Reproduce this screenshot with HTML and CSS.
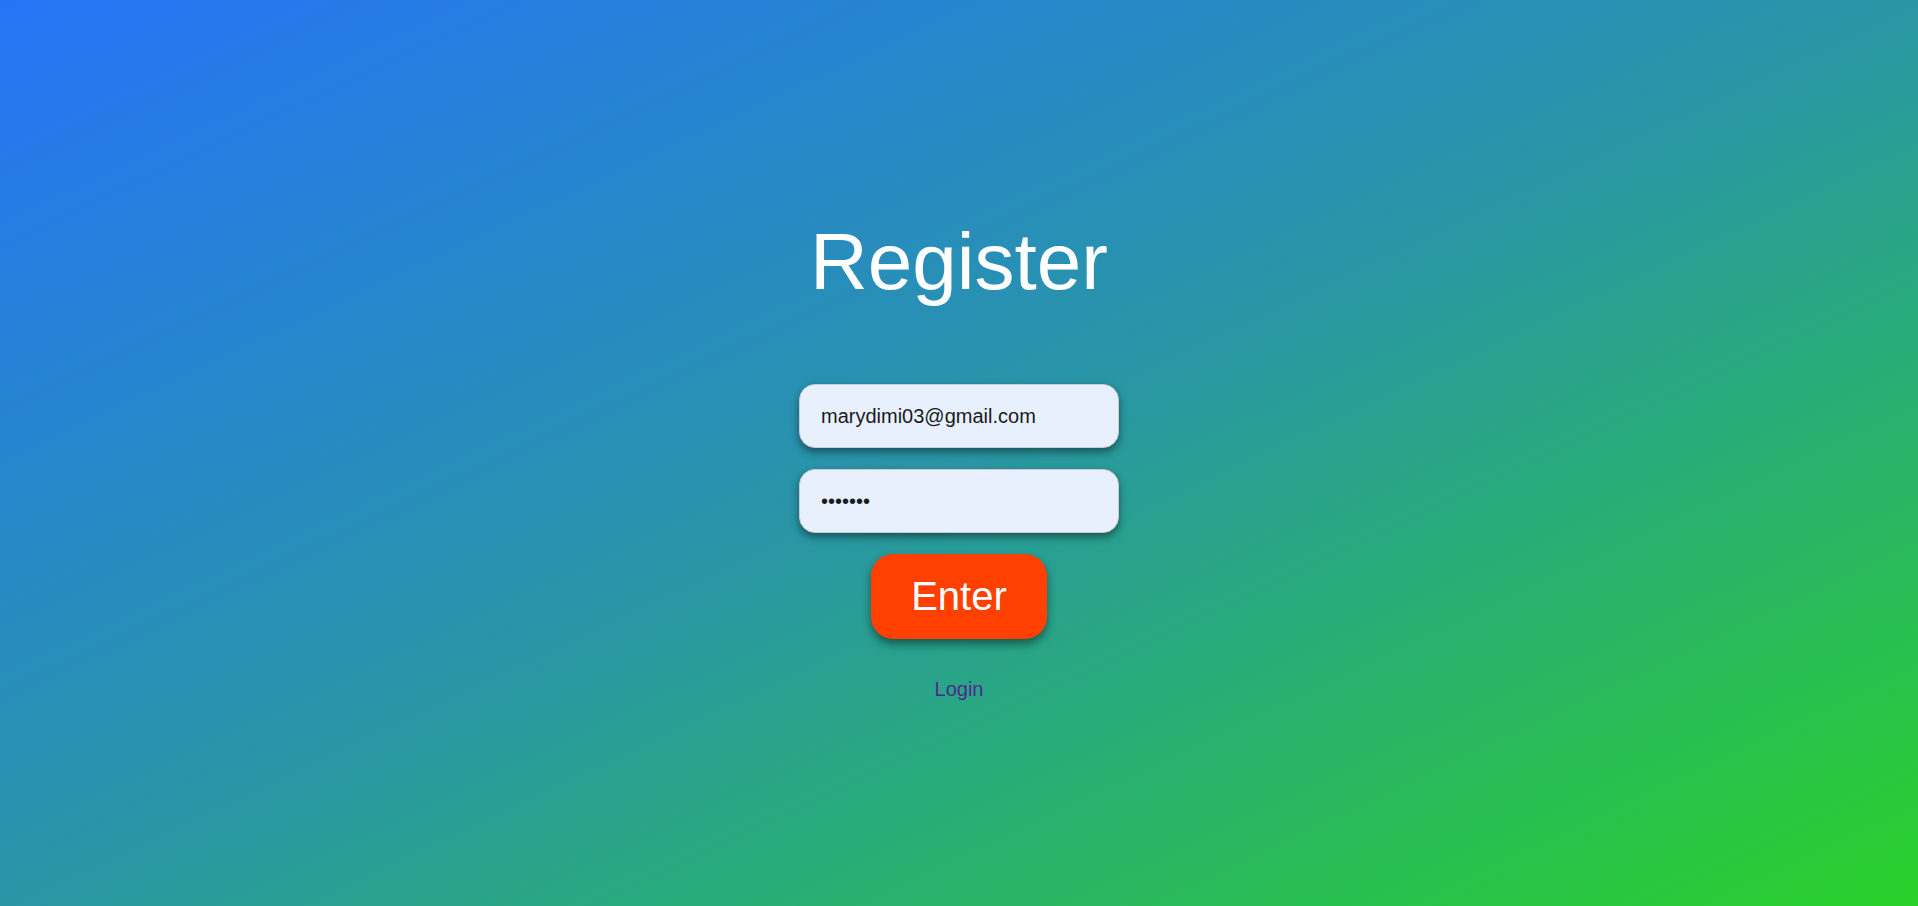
FILE: index.html
```html
<!DOCTYPE html>
<html lang="en">
<head>
<meta charset="utf-8">
<title>Register</title>
<link rel="stylesheet" href="styles.css">
</head>
<body>
<main class="page">
  <h1 class="title">Register</h1>
  <form class="form">
    <input class="field" type="email" value="marydimi03@gmail.com">
    <input class="field" type="password" value="1234567">
    <button class="enter" type="button">Enter</button>
  </form>
  <a class="login" href="#">Login</a>
</main>
</body>
</html>
```

FILE: styles.css
```css
html, body {
  margin: 0;
  padding: 0;
  height: 100%;
}
body {
  background: linear-gradient(to bottom right, #2574f7 0%, #2996a6 50%, #29d12a 100%);
  font-family: "Liberation Sans", Arial, sans-serif;
}
.page {
  min-height: 100vh;
  box-sizing: border-box;
  padding-top: 216px;
  display: flex;
  flex-direction: column;
  align-items: center;
}
.title {
  margin: 0;
  font-size: 80px;
  font-weight: 400;
  color: #ffffff;
  line-height: 92px;
}
.form {
  margin-top: 76px;
  display: flex;
  flex-direction: column;
  align-items: center;
  gap: 21px;
}
.field {
  width: 320px;
  height: 64px;
  box-sizing: border-box;
  padding: 0 21px;
  border: 1px solid #c9ccd2;
  border-radius: 16px;
  background: #e8f0fe;
  color: #1b1b1b;
  font-family: "Liberation Sans", Arial, sans-serif;
  font-size: 20px;
  box-shadow: 0 4px 8px rgba(0, 0, 0, 0.45);
  outline: none;
}
.enter {
  width: 176px;
  height: 85px;
  border: none;
  border-radius: 22px;
  background: #ff4000;
  color: #ffffff;
  font-family: "Liberation Sans", Arial, sans-serif;
  font-size: 40px;
  box-shadow: 0 5px 10px rgba(0, 0, 0, 0.45);
  cursor: pointer;
}
.login {
  margin-top: 39px;
  font-size: 20px;
  color: #4b2a8c;
  text-decoration: none;
}
```
